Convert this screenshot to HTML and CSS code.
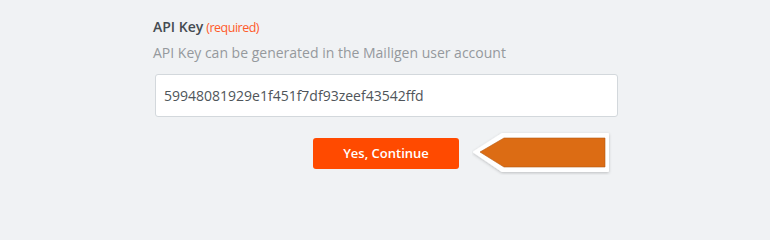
FILE: index.html
```html
<!DOCTYPE html>
<html>
<head>
<meta charset="utf-8">
<link rel="stylesheet" href="styles.css">
</head>
<body>
<div class="form">
  <div class="label"><span class="name">API Key</span><span class="req">(required)</span></div>
  <div class="help">API Key can be generated in the Mailigen user account</div>
  <div class="input">59948081929e1f451f7df93zeef43542ffd</div>
  <div class="actions">
    <button class="btn">Yes, Continue</button>
    <svg class="arrow" width="140" height="44" viewBox="0 0 140 44">
      <defs>
        <filter id="sh" x="-10%" y="-20%" width="120%" height="150%">
          <feDropShadow dx="0" dy="1" stdDeviation="1.5" flood-color="#000" flood-opacity="0.22"/>
        </filter>
      </defs>
      <path d="M2 21 L30 3 L136 3 L136 40 L30 40 Z" fill="#fff" stroke="#fff" stroke-width="2" stroke-linejoin="round" filter="url(#sh)"/>
      <path d="M8 21 L32 7 L133 7 L133 36 L32 36 Z" fill="#dc6c14" stroke="#b45a14" stroke-width="0.6"/>
    </svg>
  </div>
</div>
</body>
</html>
```
FILE: styles.css
```css
html, body {
  margin: 0;
  padding: 0;
  background: #f0f2f4;
  width: 770px;
  height: 200px;
  overflow: hidden;
}
.form {
  font-family: "Open Sans", "Liberation Sans", sans-serif;
  padding: 17px 0 0 153px;
  width: 465px;
}
.label {
  font-size: 14px;
  line-height: 20px;
  color: #454b51;
}
.name {
  font-weight: 600;
}
.req {
  margin-left: 3px;
  font-size: 12.5px;
  color: #ff5a2a;
  letter-spacing: -0.5px;
}
.help {
  margin-top: 5px;
  font-size: 14px;
  line-height: 20px;
  color: #95999d;
}
.input {
  margin-top: 11px;
  margin-left: 2px;
  height: 43px;
  box-sizing: border-box;
  border: 1px solid #d3d8dc;
  border-radius: 3px;
  background: #fff;
  padding: 0 8px;
  font-size: 14px;
  line-height: 41px;
  color: #4f555a;
}
.actions {
  display: flex;
  align-items: center;
  margin-top: 14px;
  margin-left: 160px;
}
.btn {
  width: 146px;
  height: 31px;
  border: none;
  border-radius: 3px;
  background: #ff4a00;
  color: #fff;
  font-family: "Open Sans", "Liberation Sans", sans-serif;
  font-size: 13px;
  font-weight: 600;
  padding: 0;
}
.arrow {
  display: block;
  margin-left: 13px;
}
```
